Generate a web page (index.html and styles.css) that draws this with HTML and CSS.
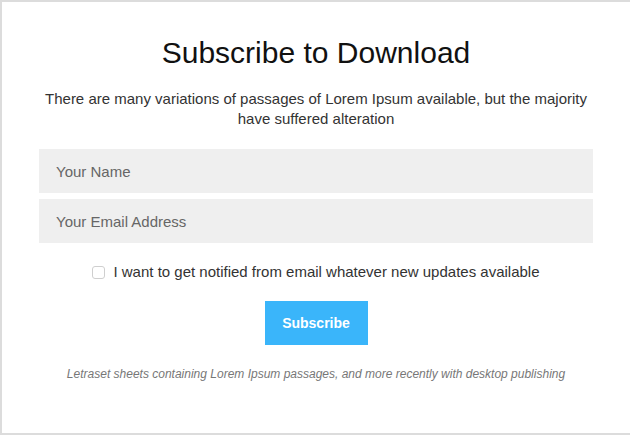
FILE: index.html
```html
<!DOCTYPE html>
<html lang="en">
<head>
<meta charset="utf-8">
<title>Subscribe to Download</title>
<link rel="stylesheet" href="styles.css">
</head>
<body>
<div class="frame">
  <h1 class="title">Subscribe to Download</h1>
  <p class="lead">There are many variations of passages of Lorem Ipsum available, but the majority<br>have suffered alteration</p>
  <form class="form">
    <input class="field" type="text" placeholder="Your Name">
    <input class="field" type="email" placeholder="Your Email Address">
    <label class="check">
      <input class="box" type="checkbox">
      <span>I want to get notified from email whatever new updates available</span>
    </label>
    <button class="btn" type="button">Subscribe</button>
    <p class="note">Letraset sheets containing Lorem Ipsum passages, and more recently with desktop publishing</p>
  </form>
</div>
</body>
</html>
```
FILE: styles.css
```css
html, body {
  margin: 0;
  padding: 0;
  background: #fff;
  overflow: hidden;
}
body {
  width: 630px;
  height: 435px;
  font-family: "Liberation Sans", Arial, sans-serif;
}
.frame {
  box-sizing: border-box;
  width: 632px;
  height: 435px;
  border: 2px solid #dcdcdc;
  padding: 33px 37px 0;
  text-align: center;
}
.title {
  margin: 0;
  font-size: 30px;
  line-height: 36px;
  font-weight: 400;
  color: #111;
}
.lead {
  margin: 18px 0 0;
  font-size: 15px;
  line-height: 20px;
  color: #333;
}
.form {
  margin: 20px 0 0;
  display: flex;
  flex-direction: column;
  align-items: center;
}
.field {
  box-sizing: border-box;
  width: 554px;
  height: 44px;
  margin: 0 0 6px;
  padding: 0 17px;
  border: 0;
  background: #efefef;
  font-family: inherit;
  font-size: 15px;
  color: #333;
  outline: none;
}
.field::placeholder {
  color: #666;
}
.check {
  margin-top: 13px;
  display: flex;
  align-items: center;
  gap: 8px;
  font-size: 15px;
  line-height: 20px;
  color: #333;
}
.box {
  appearance: none;
  -webkit-appearance: none;
  box-sizing: border-box;
  width: 13px;
  height: 13px;
  margin: 0;
  border: 1px solid #cfcfcf;
  border-radius: 3px;
  background: #fff;
}
.btn {
  margin-top: 19px;
  width: 103px;
  height: 44px;
  border: 0;
  background: #3ab5fa;
  color: #fff;
  font-family: inherit;
  font-size: 14px;
  font-weight: 700;
  cursor: pointer;
}
.note {
  margin: 20px 0 0;
  font-size: 12px;
  line-height: 18px;
  font-style: italic;
  color: #777;
}
```
